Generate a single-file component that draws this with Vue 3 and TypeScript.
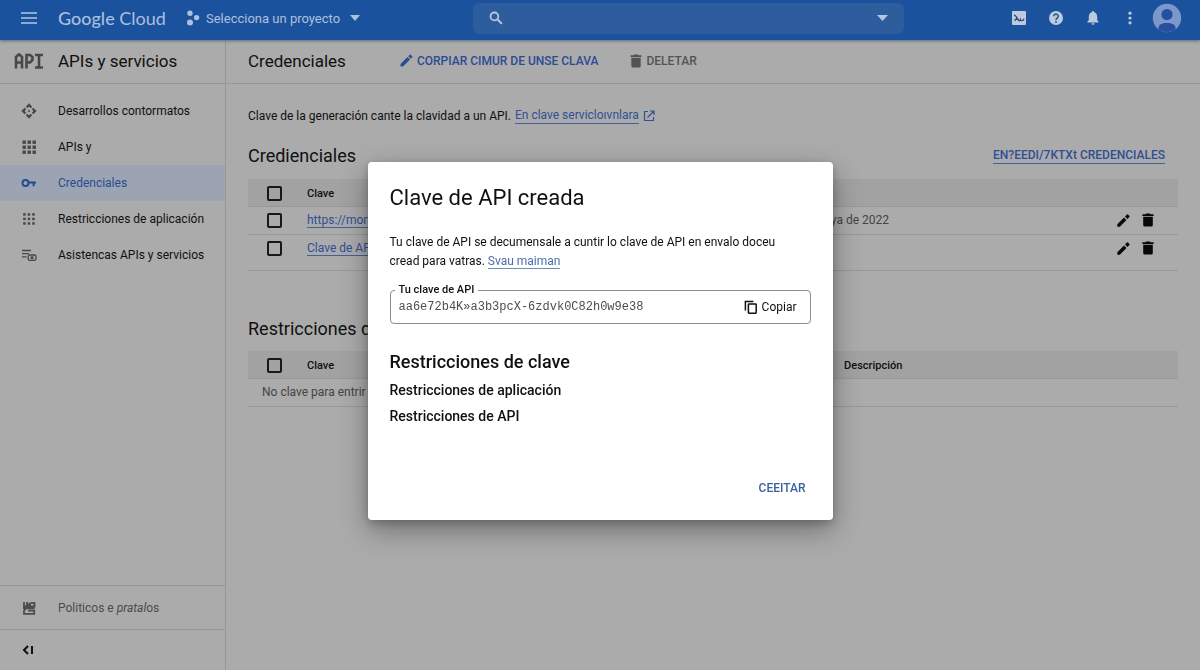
<script setup lang="ts">
import { ref } from 'vue'

interface NavItem {
  label: string
  icon: 'move' | 'grid' | 'key' | 'dots' | 'list'
  active?: boolean
}

interface Credential {
  name: string
  date: string
}

const navItems: NavItem[] = [
  { label: 'Desarrollos contormatos', icon: 'move' },
  { label: 'APIs y', icon: 'grid' },
  { label: 'Credenciales', icon: 'key', active: true },
  { label: 'Restricciones de aplicación', icon: 'dots' },
  { label: 'Asistencas APIs y servicios', icon: 'list' },
]

const credentials: Credential[] = [
  { name: 'https://mon', date: '12 de maya de 2022' },
  { name: 'Clave de API', date: '' },
]

const steps = [0, 1, 2]
const apiKey = ref('aa6e72b4K»a3b3pcX-6zdvk0C82h0w9e38')
const query = ref('')
</script>

<template>
  <div class="page">
    <header class="topbar">
      <button class="icon-btn menu-btn" aria-label="Menú">
        <svg width="18" height="14" viewBox="0 0 18 14"><path d="M1 2h16M1 7h16M1 12h16" stroke="currentColor" stroke-width="1.6" /></svg>
      </button>
      <a class="brand" href="#"><span class="brand-main">Google</span> Cloud</a>
      <button class="project">
        <svg width="14" height="16" viewBox="0 0 14 16" fill="currentColor"><circle cx="4" cy="3.2" r="2.7" /><circle cx="4" cy="12.4" r="3" /><circle cx="10.6" cy="7.6" r="2.7" /></svg>
        <span>Selecciona un proyecto</span>
        <svg class="caret" width="10" height="6" viewBox="0 0 10 6"><path d="M0 0h10L5 6z" fill="currentColor" /></svg>
      </button>
      <div class="search">
        <svg width="14" height="14" viewBox="0 0 14 14" fill="none" stroke="currentColor"><circle cx="5.4" cy="5.4" r="3.9" stroke-width="1.8" /><path d="M8.3 8.3l4.6 4.6" stroke-width="2" /></svg>
        <input v-model="query" type="text" aria-label="Buscar" />
        <button class="icon-btn" aria-label="Opciones de búsqueda">
          <svg width="11" height="6" viewBox="0 0 11 6"><path d="M0 0h11L5.5 6z" fill="currentColor" /></svg>
        </button>
      </div>
      <div class="tools">
        <button class="icon-btn" aria-label="Cloud Shell">
          <svg width="16" height="16" viewBox="0 0 16 16"><rect x="1" y="1" width="14" height="14" rx="1" fill="currentColor" /><path d="M3.200 4.800l2.400 2.200v1.500l-2 2.300M5.600 7.500l2.200 3c.8.6 1.400 0 1.600-.8.4 1.300 2.800 1.600 3.600-.9" fill="none" stroke="#2a4a78" stroke-width="1.300" /></svg>
        </button>
        <button class="icon-btn" aria-label="Ayuda">
          <svg width="16" height="16" viewBox="0 0 16 16"><circle cx="8" cy="8" r="7" fill="currentColor" /><path d="M5.8 6.3a2.2 2.2 0 1 1 3.4 1.8c-.8.5-1.2.8-1.2 1.8" fill="none" stroke="#1b5099" stroke-width="1.5" /><circle cx="8" cy="11.9" r="0.95" fill="#1b5099" /></svg>
        </button>
        <button class="icon-btn" aria-label="Notificaciones">
          <svg width="16" height="16" viewBox="0 0 16 16" fill="currentColor"><path d="M8 1a1.1 1.1 0 0 0-1.1 1.2C4.8 2.700 3.800 4.500 3.800 6.600V10.300L2.400 11.800V12.500H13.600V11.800L12.200 10.300V6.600C12.200 4.500 11.200 2.700 9.100 2.200A1.100 1.100 0 0 0 8 1zM6.500 13.300h3A1.500 1.500 0 0 1 6.500 13.300z" /></svg>
        </button>
        <button class="icon-btn" aria-label="Más opciones">
          <svg width="16" height="16" viewBox="0 0 16 16" fill="currentColor"><circle cx="8" cy="3.200" r="1.600" /><circle cx="8" cy="8" r="1.600" /><circle cx="8" cy="12.800" r="1.600" /></svg>
        </button>
      </div>
      <button class="icon-btn avatar" aria-label="Cuenta">
        <svg width="30" height="30" viewBox="0 0 30 30"><defs><clipPath id="face"><circle cx="15" cy="15" r="14" /></clipPath></defs><circle cx="15" cy="15" r="14.200" fill="#7c97c9" /><g clip-path="url(#face)" fill="#264f9f"><circle cx="15" cy="11.500" r="5.600" /><path d="M6.500 30v-5c0-3.600 3.500-5 8.500-5s8.500 1.400 8.500 5v5z" /></g></svg>
      </button>
    </header>

    <div class="body">
      <aside class="sidebar">
        <div class="side-title">
          <svg class="api-mark" width="30" height="16" viewBox="0 0 30 16" fill="none" stroke="currentColor" stroke-width="2.600"><path d="M2 15.500V4l2.500-2.500h1L8 4v11.500M2 9.500h6M12.500 15.500V2h3.500l2.500 2v3l-2.500 2.500h-3.500M21 2h8M25 2v12.500M21 14.500h8" /></svg>
          <h2>APIs y servicios</h2>
        </div>
        <nav class="nav">
          <a v-for="item in navItems" :key="item.label" href="#" class="nav-item" :class="{ active: item.active }">
            <svg v-if="item.icon === 'move'" width="16" height="16" viewBox="0 0 16 16" fill="currentColor"><path d="M8 .3l3.200 3.400L9.800 5.200 8 3.600 6.200 5.200 4.800 3.700zM8 15.700l3.200-3.400-1.400-1.500L8 12.400l-1.800-1.600-1.400 1.500zM.3 8l3.400-3.200L5.200 6.200 3.600 8l1.600 1.800-1.500 1.400zM15.700 8l-3.400-3.200-1.500 1.400L12.400 8l-1.600 1.800 1.500 1.400z" /><path d="M8 2l2 2H6zM8 14l2-2H6zM2 8l2-2v4zM14 8l-2-2v4z" /><circle cx="8" cy="8" r="1" /></svg>
            <svg v-else-if="item.icon === 'grid'" width="16" height="16" viewBox="0 0 16 16" fill="currentColor"><template v-for="r in steps" :key="r"><rect v-for="c in steps" :key="c" :x="1.5 + c * 5" :y="1.5 + r * 5" width="3.400" height="3.400" /></template></svg>
            <svg v-else-if="item.icon === 'key'" width="16" height="16" viewBox="0 0 16 16" fill="none" stroke="currentColor" stroke-width="2"><circle cx="4.500" cy="8" r="3" /><path d="M7.500 7.600h7.500M12.600 7.600v3.600" /></svg>
            <svg v-else-if="item.icon === 'dots'" width="16" height="16" viewBox="0 0 16 16" fill="currentColor"><template v-for="r in steps" :key="r"><rect v-for="c in steps" :key="c" :x="2.2 + c * 4.5" :y="2.2 + r * 4.5" width="2.500" height="2.500" /></template></svg>
            <svg v-else width="16" height="16" viewBox="0 0 16 16" fill="none" stroke="currentColor" stroke-width="1.300"><path d="M1 3.500h9M1 6.700h7M1 9.900h4.500" /><rect x="7.200" y="8" width="7.800" height="5.400" rx="1.600" /><circle cx="11.100" cy="10.700" r="1" /></svg>
            <span>{{ item.label }}</span>
          </a>
        </nav>
        <div class="side-foot">
          <a href="#" class="policy">
            <svg width="16" height="16" viewBox="0 0 16 16" fill="none" stroke="currentColor" stroke-width="1.800"><path d="M3 2v4.500h10.500V2.800H10M6 2v2.500h3V2.500M2 8h11.500M5 8.500L3 10.500v3.300h10.200v-3.300H7" /></svg>
            <span>Politicos e <i>pratal</i>os</span>
          </a>
          <button class="collapse" aria-label="Contraer menú">
            <svg width="16" height="12" viewBox="0 0 16 12" fill="none" stroke="currentColor" stroke-width="2"><path d="M7 2L3 6l4 4M11 2v8" /></svg>
          </button>
        </div>
      </aside>

      <main class="main">
        <div class="title-bar">
          <h1>Credenciales</h1>
          <button class="action primary">
            <svg width="13" height="13" viewBox="0 0 13 13" fill="currentColor"><path d="M.5 10v2.500H3L10 5.500 7.500 3zM8.200 2.300l2.500 2.500 1.500-1.500a.7.7 0 0 0 0-1L10.700.8a.7.7 0 0 0-1 0z" /></svg>
            <span>CORPIAR CIMUR DE UNSE CLAVA</span>
          </button>
          <button class="action">
            <svg width="12" height="14" viewBox="0 0 12 14" fill="currentColor"><path d="M.6 1.300h3L4.300.4h3.400l.7.900h3v1.600H.6zM1.300 3.700h9.400v8.400a1.500 1.500 0 0 1-1.500 1.500H2.800a1.500 1.500 0 0 1-1.500-1.500z" /></svg>
            <span>DELETAR</span>
          </button>
        </div>

        <div class="content">
          <p class="intro">
            <span>Clave de la generación cante la clavidad a un API.</span>
            <a href="#">En clave servicloıvnlara</a>
            <svg width="12" height="12" viewBox="0 0 12 12" fill="none" stroke="currentColor" stroke-width="1.200"><path d="M5 1.500H1.500v9h9V7M7 1h4v4M11 1L4.500 7.500" /></svg>
          </p>

          <div class="section-head">
            <h2>Credienciales</h2>
            <a href="#">EN?EEDI/7KTXt CREDENCIALES</a>
          </div>
          <div class="table-wrap spaced">
            <table>
              <colgroup><col class="c-check" /><col class="c-name" /><col class="c-date" /><col class="c-act" /></colgroup>
              <thead>
                <tr>
                  <th class="check"><input type="checkbox" aria-label="Seleccionar todo" /></th>
                  <th>Clave</th><th></th><th></th>
                </tr>
              </thead>
              <tbody>
                <tr v-for="row in credentials" :key="row.name">
                  <td class="check"><input type="checkbox" :aria-label="'Seleccionar ' + row.name" /></td>
                  <td><a href="#">{{ row.name }}</a></td>
                  <td class="muted">{{ row.date }}</td>
                  <td>
                    <div class="row-actions">
                      <button class="icon-btn" aria-label="Editar">
                        <svg width="13" height="13" viewBox="0 0 13 13" fill="currentColor"><path d="M.3 10.200v2.500h2.500L9.500 6 7 3.500zM8 2.500L10.500 5l1.900-1.900a.8.8 0 0 0 0-1.100L11 .6a.8.8 0 0 0-1.100 0z" /></svg>
                      </button>
                      <button class="icon-btn" aria-label="Eliminar">
                        <svg width="12" height="14" viewBox="0 0 12 14" fill="currentColor"><path d="M.4 1.300h3L4.200.4h3.600l.8.900h3v1.600H.4zM1.200 3.700h9.600v8.400a1.500 1.500 0 0 1-1.500 1.500H2.700a1.500 1.500 0 0 1-1.500-1.500z" /></svg>
                      </button>
                    </div>
                  </td>
                </tr>
              </tbody>
            </table>
          </div>

          <div class="section-head second">
            <h2>Restricciones de clave</h2>
          </div>
          <div class="table-wrap">
            <table>
              <colgroup><col class="c-check" /><col class="c-rest" /><col /></colgroup>
              <thead>
                <tr>
                  <th class="check"><input type="checkbox" aria-label="Seleccionar todas las restricciones" /></th>
                  <th>Clave</th><th>Descripción</th>
                </tr>
              </thead>
              <tbody>
                <tr><td colspan="3" class="empty">No clave para entrir</td></tr>
              </tbody>
            </table>
          </div>
        </div>
      </main>
    </div>

    <div class="layer">
      <section class="dialog" role="dialog" aria-modal="true" aria-labelledby="dialog-title">
        <h2 id="dialog-title">Clave de API creada</h2>
        <p>Tu clave de API se decumensale a cuntir lo clave de API en envalo doceu cread para vatras. <a href="#">Svau maiman</a></p>
        <fieldset>
          <legend><label for="api-key">Tu clave de API</label></legend>
          <div class="key-row">
            <input id="api-key" v-model="apiKey" type="text" readonly />
            <button class="copy">
              <svg width="14" height="14" viewBox="0 0 14 14" fill="none" stroke="currentColor" stroke-width="1.500"><path d="M1.400 10.500V1.400h8" /><rect x="4.400" y="4" width="7.800" height="9.200" rx=".6" /></svg>
              <span>Copiar</span>
            </button>
          </div>
        </fieldset>
        <h3>Restricciones de clave</h3>
        <h4>Restricciones de aplicación</h4>
        <h4>Restricciones de API</h4>
        <footer><button class="close">CEEITAR</button></footer>
      </section>
    </div>
  </div>
</template>

<style>
body {
  background: #ababab;
}
</style>

<style scoped>
.page {
  display: flex;
  flex-direction: column;
  min-height: 100vh;
  background: #ababab;
  color: #101010;
  font-family: Roboto, "Liberation Sans", sans-serif;
  font-size: 12px;
}
h1, h2, h3, h4, p {
  margin: 0;
  font-weight: 400;
}
button, input {
  font: inherit;
  color: inherit;
}
button {
  display: flex;
  align-items: center;
  padding: 0;
  border: 0;
  background: none;
  cursor: pointer;
}
svg {
  display: block;
  flex: none;
}
a {
  color: #304f94;
  text-decoration: none;
}
.icon-btn {
  justify-content: center;
}

.topbar {
  display: flex;
  align-items: center;
  box-sizing: border-box;
  height: 40px;
  padding: 0 18px 4px 20px;
  background: #1b529d;
  color: #b4c6e0;
  box-shadow: 0 1px 3px #5a6a80;
  z-index: 1;
}
.menu-btn {
  width: 18px;
  margin-right: 20px;
}
.brand {
  width: 108px;
  margin-right: 20px;
  color: #a9bfdf;
  font-family: Lato, Roboto, sans-serif;
  font-size: 18px;
  white-space: nowrap;
}
.brand-main {
  font-weight: 500;
}
.project {
  gap: 6px;
  color: #adc0de;
  font-size: 13px;
  white-space: nowrap;
}
.caret {
  margin-left: 4px;
}
.search {
  display: flex;
  align-items: center;
  flex: 0 1 431px;
  box-sizing: border-box;
  height: 31px;
  margin-left: 113px;
  padding: 0 16px;
  border-radius: 6px;
  background: #2e5d9d;
}
.search input {
  flex: 1;
  min-width: 0;
  border: 0;
  outline: 0;
  background: none;
}
.tools {
  display: flex;
  gap: 21px;
  margin-left: auto;
  color: #bccadb;
}
.avatar {
  margin-left: 14px;
}

.body {
  display: flex;
  flex: 1;
}
.sidebar {
  display: flex;
  flex-direction: column;
  box-sizing: border-box;
  width: 226px;
  border-right: 1px solid #979797;
}
.side-title,
.title-bar {
  display: flex;
  align-items: center;
  box-sizing: border-box;
  height: 44px;
  padding-bottom: 2px;
  border-bottom: 1px solid #979797;
}
.side-title {
  gap: 14px;
  padding-left: 14px;
}
.api-mark {
  color: #484848;
}
.side-title h2,
.title-bar h1 {
  font-size: 17px;
}
.nav {
  flex: 1;
  padding-top: 9px;
}
.nav-item,
.policy {
  display: flex;
  align-items: center;
  gap: 21px;
  padding-left: 21px;
}
.nav-item {
  height: 36px;
  color: #101010;
  font-size: 12px;
}
.nav-item svg {
  color: #484848;
}
.nav-item.active {
  background: #9ca4b3;
}
.nav-item.active,
.nav-item.active svg {
  color: #274b94;
}
.side-foot .policy {
  height: 43px;
  border-top: 1px solid #979797;
  color: #4c4c4c;
}
.collapse {
  width: 100%;
  height: 41px;
  padding-left: 21px;
  border-top: 1px solid #979797;
}

.main {
  flex: 1;
  min-width: 0;
}
.title-bar {
  padding-left: 22px;
}
.action {
  gap: 4px;
  margin-left: 32px;
  color: #535353;
  font-weight: 500;
}
.action.primary {
  margin-left: 54px;
  color: #2b4c93;
}
.content {
  padding: 22px 22px 0;
}
.intro {
  display: flex;
  align-items: center;
  gap: 4px;
  line-height: 20px;
}
.intro svg {
  color: #304f94;
}
.intro a,
td a,
.section-head a {
  border-bottom: 1px solid #4560a0;
}
.intro a,
td a {
  line-height: 15px;
}
.section-head {
  display: flex;
  align-items: center;
  justify-content: space-between;
  height: 28px;
  margin: 15px 13px 10px 0;
}
.section-head.second {
  margin-top: 43px;
  margin-bottom: 9px;
}
.section-head h2 {
  font-size: 18px;
}
.section-head a {
  font-weight: 500;
  line-height: 16px;
}
.table-wrap {
  border-bottom: 1px solid #989898;
}
.table-wrap.spaced {
  padding-bottom: 8px;
}
table {
  width: 100%;
  border-collapse: collapse;
  table-layout: fixed;
}
.c-check {
  width: 59px;
}
.c-name {
  width: 51%;
}
.c-rest {
  width: 57.75%;
}
.c-act {
  width: 61px;
}
th, td {
  box-sizing: border-box;
  padding: 0;
  text-align: left;
}
th {
  height: 27px;
  padding-top: 2px;
  background: #a2a2a2;
  font-size: 11px;
  font-weight: 500;
}
td {
  height: 28px;
}
tbody tr {
  border-top: 1px solid #989898;
}
.check {
  padding-left: 19px;
}
input[type="checkbox"] {
  display: block;
  appearance: none;
  box-sizing: border-box;
  width: 15px;
  height: 15px;
  margin: 0;
  border: 2px solid #181818;
  border-radius: 2px;
}
.muted,
.empty {
  color: #444;
}
.empty {
  padding-left: 14px;
}
.row-actions {
  display: flex;
  gap: 12px;
  color: #080808;
}

.layer {
  position: fixed;
  inset: 0;
  z-index: 2;
  display: flex;
  align-items: center;
  justify-content: center;
  padding-top: 12px;
}
.dialog {
  box-sizing: border-box;
  width: 465px;
  max-width: 100%;
  padding: 21px 22px 16px;
  border-radius: 4px;
  background: #fff;
  box-shadow: 0 10px 28px rgba(0, 0, 0, 0.35), 0 3px 8px rgba(0, 0, 0, 0.2);
}
.dialog h2 {
  font-size: 22px;
  line-height: 30px;
}
.dialog p {
  margin-top: 20px;
  padding-right: 24px;
  line-height: 19px;
}
.dialog p a {
  border-bottom: 1px solid #6d8fc0;
  color: #4a6ea6;
}
fieldset {
  min-width: 0;
  margin: 12px 0 0;
  padding: 0 13px 0 4px;
  border: 1px solid #8d8d8d;
  border-radius: 4px;
}
legend {
  padding: 0 4px;
  font-size: 11px;
  font-weight: 500;
  line-height: 14px;
}
.key-row {
  display: flex;
  align-items: center;
  box-sizing: border-box;
  height: 26px;
  padding: 0 0 6px 4px;
}
.key-row input {
  flex: 1;
  min-width: 0;
  padding: 0;
  border: 0;
  outline: 0;
  background: none;
  color: #4d4d4d;
  font-family: "Liberation Mono", monospace;
}
.copy {
  gap: 4px;
}
.dialog h3 {
  margin: 25px 0 2px;
  font-size: 18px;
  font-weight: 500;
  line-height: 26px;
}
.dialog h4 {
  font-size: 14px;
  font-weight: 500;
  line-height: 26px;
}
footer {
  display: flex;
  justify-content: flex-end;
  margin-top: 43px;
}
.close {
  height: 32px;
  padding: 0 5px;
  color: #3a5f9f;
  font-weight: 500;
}
</style>
